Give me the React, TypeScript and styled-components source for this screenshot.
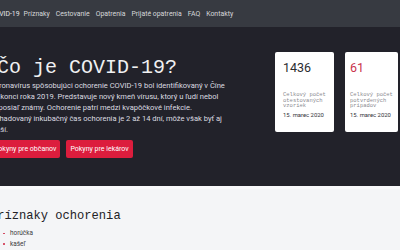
import styled, { createGlobalStyle } from 'styled-components';

const GlobalStyle = createGlobalStyle`
  html, body {
    margin: 0;
    padding: 0;
    background: #f4f5f7;
    overflow: hidden;
  }
  body {
    font-family: Roboto, "Liberation Sans", sans-serif;
  }
`;

const navItems = ['Príznaky', 'Cestovanie', 'Opatrenia', 'Prijaté opatrenia', 'FAQ', 'Kontakty'];

const stats = [
  { value: '1436', label: 'Celkový počet otestovaných vzoriek', date: '15. marec 2020', accent: false, width: 59, pad: 8 },
  { value: '61', label: 'Celkový počet potvrdených prípadov', date: '15. marec 2020', accent: true, width: 53, pad: 5 },
];

const symptoms = ['horúčka', 'kašeľ'];

export default function App() {
  return (
    <>
      <GlobalStyle />
      <NavBar>
        <Container>
          <NavList>
            <Brand>COVID-19</Brand>
            {navItems.map((item) => (
              <NavLink key={item}>{item}</NavLink>
            ))}
          </NavList>
        </Container>
      </NavBar>

      <Hero>
        <Container>
          <HeroGrid>
            <HeroText>
              <Title>Čo je COVID-19?</Title>
              <Lead>
                Koronavírus spôsobujúci ochorenie COVID-19 bol identifikovaný v Číne na konci roka 2019.
                Predstavuje nový kmeň vírusu, ktorý u ľudí nebol doposiaľ známy. Ochorenie patrí medzi
                kvapôčkové infekcie. Odhadovaný inkubačný čas ochorenia je 2 až 14 dní, môže však byť aj
                dlhší.
              </Lead>
              <Buttons>
                <RedButton>Pokyny pre občanov</RedButton>
                <RedButton>Pokyny pre lekárov</RedButton>
              </Buttons>
            </HeroText>
            <Cards>
              {stats.map((s) => (
                <Card key={s.value} $width={s.width} $pad={s.pad}>
                  <Value $accent={s.accent}>{s.value}</Value>
                  <Label>{s.label}</Label>
                  <DateText>{s.date}</DateText>
                </Card>
              ))}
            </Cards>
          </HeroGrid>
        </Container>
      </Hero>

      <Section>
        <Container>
          <SectionTitle>Príznaky ochorenia</SectionTitle>
          <List>
            {symptoms.map((s) => (
              <Item key={s}>{s}</Item>
            ))}
          </List>
        </Container>
      </Section>
    </>
  );
}

const Container = styled.div`
  margin-left: -10px;
  width: 420px;
`;

const NavBar = styled.nav`
  background: #373a41;
  height: 27px;
`;

const NavList = styled.div`
  display: flex;
  align-items: center;
  gap: 6px;
  height: 28px;
  font-size: 6.9px;
  color: #d6d7da;
`;

const Brand = styled.span`
  color: #e4e5e8;
  margin-right: -2px;
`;

const NavLink = styled.span`
  white-space: nowrap;
`;

const Hero = styled.header`
  background: #22222a;
  height: 159px;
  padding-top: 25px;
  box-sizing: border-box;
`;

const HeroGrid = styled.div`
  display: grid;
  grid-template-columns: 240px auto;
  column-gap: 45px;
  align-items: start;
`;

const HeroText = styled.div`
  padding-top: 4px;
`;

const Title = styled.h1`
  margin: 0 0 0 7px;
  font-family: "Liberation Mono", "DejaVu Sans Mono", monospace;
  font-weight: 400;
  font-size: 20px;
  line-height: 24px;
  color: #f0f0f2;
  white-space: nowrap;
`;

const Lead = styled.p`
  margin: 0;
  width: 236px;
  font-size: 7.55px;
  line-height: 11px;
  color: #dcdce0;
`;

const Buttons = styled.div`
  display: flex;
  gap: 6px;
  margin-top: 5px;
`;

const RedButton = styled.button`
  font-family: Roboto, "Liberation Sans", sans-serif;
  font-size: 7px;
  height: 18px;
  padding: 0 4px;
  border: none;
  border-radius: 2px;
  background: #dc1d3d;
  color: #fff;
  white-space: nowrap;
`;

const Cards = styled.div`
  display: flex;
  gap: 11px;
`;

const Card = styled.div<{ $width: number; $pad: number }>`
  width: ${(p) => p.$width}px;
  height: 80px;
  box-sizing: border-box;
  padding: 8px ${(p) => p.$pad}px 0;
  background: #fff;
  border-radius: 2px;
`;

const Value = styled.div<{ $accent: boolean }>`
  font-size: 12.5px;
  line-height: 16px;
  color: ${(p) => (p.$accent ? '#c9314c' : '#2b2b30')};
`;

const Label = styled.div`
  margin-top: 16px;
  font-family: "Liberation Mono", "DejaVu Sans Mono", monospace;
  font-size: 5.5px;
  line-height: 5.6px;
  color: #8a8a90;
`;

const DateText = styled.div`
  margin-top: 2px;
  font-size: 5.9px;
  line-height: 8px;
  color: #333338;
`;

const Section = styled.section`
  background: #f4f5f7;
  border-top: 3px solid #f8f8fa;
  padding-top: 19px;
`;

const SectionTitle = styled.h2`
  margin: 0;
  font-family: "Liberation Mono", "DejaVu Sans Mono", monospace;
  font-weight: 400;
  font-size: 12.1px;
  line-height: 16px;
  color: #222226;
`;

const List = styled.ul`
  list-style: none;
  margin: 4px 0 0;
  padding: 0 0 0 20px;
`;

const Item = styled.li`
  position: relative;
  font-size: 6.4px;
  line-height: 10.5px;
  color: #3a3a40;
  &::before {
    content: '';
    position: absolute;
    left: -7px;
    top: 4.5px;
    width: 1.6px;
    height: 1.6px;
    border-radius: 50%;
    background: #d0344f;
  }
`;
